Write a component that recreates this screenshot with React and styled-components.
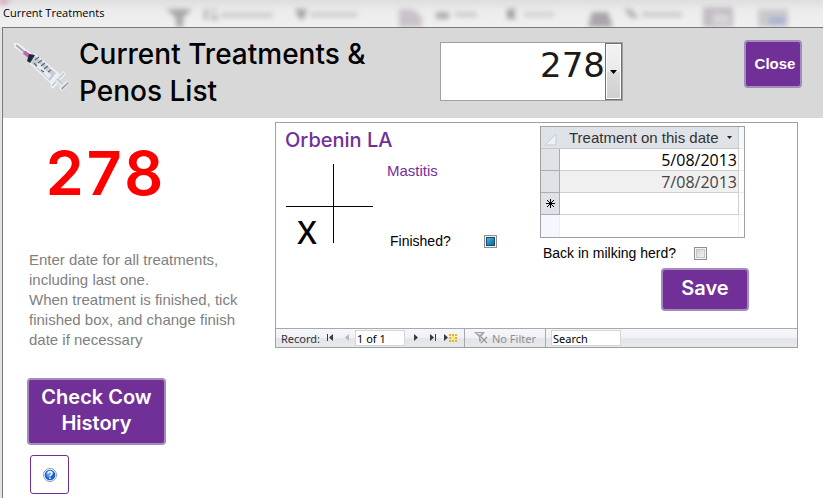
import styled, { createGlobalStyle } from "styled-components";

const treatments = ["5/08/2013", "7/08/2013"];

const RibbonBlur = () => (
  <RibbonSvg viewBox="0 0 823 27" preserveAspectRatio="xMinYMin slice" aria-hidden="true">
    <defs>
      <filter id="soft" x="-20%" y="-50%" width="140%" height="200%">
        <feGaussianBlur stdDeviation="2.6" />
      </filter>
    </defs>
    <g filter="url(#soft)">
      <path d="M0 0h12l-8 4H0z" fill="#d68aa5" />
      <path d="M166 9h26l-9 9v9h-7v-9z" fill="#aaa6ab" />
      <path d="M204 9h4v11h-4zM211 9h5v3h-5zM211 15h7v5h-7z" fill="#b9b7ba" />
      <path d="M221 12h52v6h-52z" fill="#d0d0d0" />
      <path d="M295 9h12l-3 10h-5z" fill="#a9a5aa" />
      <path d="M310 12h48v5h-48z" fill="#cecece" />
      <path d="M399 9h14l9 8v10h-23z" fill="#c9c3c9" />
      <path d="M436 12h13v7h-13z" fill="#b0adb1" />
      <path d="M455 12h22v5h-22z" fill="#cccccc" />
      <path d="M507 9h10l-4 5 4 5h-10z" fill="#a19ca2" />
      <path d="M524 12h30v5h-30z" fill="#d2d2d2" />
      <path d="M588 27l4-15h16l5 15z" fill="#aaa5ab" />
      <path d="M624 9h7l8 9h-8z" fill="#b3b0b4" />
      <path d="M642 12h40v5h-40z" fill="#cacaca" />
      <path d="M703 7h30v20h-30z" fill="#c2bec3" />
      <path d="M713 14h16v10h-16z" fill="#d8d5d9" />
      <path d="M758 9h30v18h-30z" fill="#cac9cc" />
      <path d="M769 17h16v7h-16z" fill="#a5b3d2" />
    </g>
  </RibbonSvg>
);

const Syringe = () => (
  <SyringeSvg viewBox="0 0 56 50" aria-hidden="true">
    <path d="M2 2l12 9" stroke="#f4f4f6" strokeWidth="5" strokeLinecap="round" />
    <path d="M2 2l12 10" stroke="#a4a8b2" strokeWidth="2" />
    <path d="M10 9l5 4" stroke="#c45fb4" strokeWidth="4" />
    <path d="M20 10l26 21-8 11-24-23z" fill="#eef0f3" />
    <path d="M20 12l22 18-6 8-21-20z" fill="#c6cbd4" />
    <path d="M23 21l13 13" stroke="#e8ebf0" strokeWidth="4" />
    <path d="M15 11l6 1-5 8-3-2z" fill="#20263a" />
    <path d="M21 17l4-3M24 20l4-3M27 23l4-3M30 26l4-3M34 29l3-2M20 20l3 3M27 27l3 2" stroke="#5f677a" strokeWidth="1.3" />
    <path d="M36 43L49 28l3 3-13 15z" fill="#eef1f5" />
    <path d="M38 43l12-13" stroke="#b9c3d4" strokeWidth="1.3" />
    <path d="M42 36l7 6" stroke="#dfe4ec" strokeWidth="5" />
    <path d="M43 36l6 5" stroke="#a6afbd" />
    <path d="M45 45l8-7 3 2-8 8z" fill="#f3f4f6" />
    <path d="M47 45l7-6 1 1-7 7z" fill="#9da0a8" />
  </SyringeSvg>
);

const RecordNavigation = () => (
  <RecordBar>
    <RecordLabel htmlFor="record">Record:</RecordLabel>
    <NavButton aria-label="First record">
      <svg width="7" height="8"><path d="M0 0h1v7H0zM6 0v7L2 3.5z" fill="#343942" /></svg>
    </NavButton>
    <NavButton aria-label="Previous record">
      <svg width="5" height="8"><path d="M4 0v7L0 3.5z" fill="#b4b7bc" /></svg>
    </NavButton>
    <BarInput id="record" defaultValue="1 of 1" />
    <NavButton aria-label="Next record">
      <svg width="5" height="8"><path d="M0 0v7l4-3.5z" fill="#343942" /></svg>
    </NavButton>
    <NavButton aria-label="Last record" $tight>
      <svg width="7" height="8"><path d="M0 0v7l4-3.5zM5 0h1v7H5z" fill="#343942" /></svg>
    </NavButton>
    <NavButton aria-label="New record" $tight>
      <svg width="13" height="8">
        <path d="M0 0v7l4-3.5z" fill="#343942" />
        <path d="M5 0h2v2H5zM8 0h2v2H8zM11 0h2v2h-2zM5 3h2v2H5zM11 3h2v2h-2zM5 6h2v2H5zM8 6h2v2H8zM11 6h2v2h-2z" fill="#e4b525" />
        <path d="M7 2h4v4H7z" fill="#fbe67a" />
      </svg>
    </NavButton>
    <FilterButton disabled>
      <svg width="14" height="12">
        <path d="M0 0h11L7 5v6L5 9V5z" fill="#a2a3a7" />
        <path d="M2 1h6L6 3z" fill="#e3e4e6" />
        <path d="M7 5l6 6M13 5l-6 6" stroke="#f0f0f0" strokeWidth="3" />
        <path d="M7 5l6 6M13 5l-6 6" stroke="#96979b" strokeWidth="1.4" />
      </svg>
      No Filter
    </FilterButton>
    <SearchInput aria-label="Search" placeholder="Search" />
  </RecordBar>
);

const TreatmentDates = () => (
  <DateTable>
    <colgroup>
      <col width="19" />
      <col />
      <col width="5" />
    </colgroup>
    <thead>
      <tr>
        <HeadCell aria-label="Select all">
          <svg width="18" height="16"><path d="M15 4v11H4z" fill="#eaf1f8" stroke="#c3ccd6" /></svg>
        </HeadCell>
        <HeadCell $divider>
          <HeadContent>
            Treatment on this date
            <svg width="5" height="3"><path d="M0 0h5L2.5 3z" fill="#222" /></svg>
          </HeadContent>
        </HeadCell>
        <EdgeCell $tinted />
      </tr>
    </thead>
    <tbody>
      {treatments.map((date, index) => (
        <tr key={date}>
          <Selector />
          <DateCell $shaded={index % 2 === 1}>{date}</DateCell>
          <EdgeCell />
        </tr>
      ))}
      <tr>
        <Selector>
          <svg width="9" height="9"><path d="M4.5 0v9M0 4.5h9M1 1l7 7M8 1L1 8" stroke="#000" /></svg>
        </Selector>
        <DateCell />
        <EdgeCell />
      </tr>
      <tr>
        <EmptyCell $tinted />
        <EmptyCell />
        <EmptyCell />
      </tr>
    </tbody>
  </DateTable>
);

export default function App() {
  return (
    <>
      <GlobalStyle />
      <Frame>
        <TitleBar>
          <RibbonBlur />
          <WindowTitle>Current Treatments</WindowTitle>
        </TitleBar>
        <FormWindow>
          <Header>
            <Syringe />
            <Title>Current Treatments & Penos List</Title>
            <Combo>
              <ComboSelect aria-label="Cow number" defaultValue="278">
                <option>278</option>
              </ComboSelect>
              <ComboArrow>
                <svg width="7" height="4"><path d="M0 0h7L3.5 4z" fill="#000" /></svg>
              </ComboArrow>
            </Combo>
            <CloseButton>Close</CloseButton>
          </Header>
          <Body>
            <Sidebar>
              <CowNumber>278</CowNumber>
              <Help>
                Enter date for all treatments, including last one.
                <br />
                When treatment is finished, tick finished box, and change finish date if necessary
              </Help>
              <HistoryButton>Check Cow History</HistoryButton>
              <HelpButton aria-label="Help">
                <svg width="14" height="14" viewBox="0 0 14 14">
                  <circle cx="7" cy="7" r="6.5" fill="#fff" stroke="#7d9cc8" />
                  <circle cx="7" cy="7" r="5.3" fill="#1c5fd0" />
                  <path d="M3 6a4 4 0 0 1 7-2L5 10z" fill="#5d9df0" />
                  <path d="M5 5.6C5 3.2 9 3.2 9 5.4 9 6.8 7 6.8 7 8.4M7 9.5v1.4" fill="none" stroke="#fff" strokeWidth="1.5" />
                </svg>
              </HelpButton>
            </Sidebar>
            <Panel>
              <Record>
                <Drug>Orbenin LA</Drug>
                <Quarters>
                  <Quarter />
                  <Quarter />
                  <Quarter>X</Quarter>
                  <Quarter />
                </Quarters>
                <Details>
                  <Condition>Mastitis</Condition>
                  <CheckRow $gap={33}>
                    <label htmlFor="finished">Finished?</label>
                    <Checkbox id="finished" type="checkbox" $filled />
                  </CheckRow>
                </Details>
                <Dates>
                  <TreatmentDates />
                  <CheckRow $gap={18}>
                    <label htmlFor="herd">Back in milking herd?</label>
                    <Checkbox id="herd" type="checkbox" />
                  </CheckRow>
                  <SaveButton>Save</SaveButton>
                </Dates>
              </Record>
              <RecordNavigation />
            </Panel>
          </Body>
        </FormWindow>
      </Frame>
    </>
  );
}

const GlobalStyle = createGlobalStyle`
  * {
    box-sizing: border-box;
  }

  body {
    margin: 0;
    background-color: #fff;
    color: #000;
    font-family: "Liberation Sans", Arial, sans-serif;
    font-size: 15px;
  }

  button, input, select {
    font-family: inherit;
    margin: 0;
  }

  svg {
    display: block;
  }
`;

const Frame = styled.div`
  min-height: 100vh;
  display: flex;
  flex-direction: column;
  padding-left: 2px;
  background: linear-gradient(90deg, #d9dce0, #f5f5f5 3px);
`;

const TitleBar = styled.div`
  display: grid;
  height: 27px;
  margin-left: -2px;
  overflow: hidden;
  background: linear-gradient(#dedede, #ececec 40%, #f0f0f0);
`;

const RibbonSvg = styled.svg`
  grid-area: 1 / 1;
  width: 100%;
  height: 27px;
`;

const WindowTitle = styled.span`
  grid-area: 1 / 1;
  justify-self: start;
  z-index: 1;
  padding: 0 8px 0 3px;
  font-family: "Open Sans", sans-serif;
  font-size: 11px;
  line-height: 26px;
`;

const FormWindow = styled.main`
  flex: 1;
  border-top: 1px solid #777;
  border-left: 1px solid #777;
  background-color: #fff;
`;

const Header = styled.header`
  display: flex;
  align-items: flex-start;
  height: 90px;
  padding: 12px 21px 0 11px;
  background-color: #d8d8d8;
`;

const SyringeSvg = styled.svg`
  flex: none;
  width: 56px;
  height: 50px;
  margin-top: 3px;
`;

const Title = styled.h1`
  width: 300px;
  margin: -4px 61px 0 9px;
  font-family: Inter, sans-serif;
  font-size: 28px;
  font-weight: 500;
  line-height: 37px;
`;

const Combo = styled.div`
  display: grid;
  grid-template-columns: 1fr 17px;
  width: 183px;
  height: 59px;
  margin-top: 2px;
  border: 1px solid #a0a0a0;
  background-color: #fff;
`;

const ComboSelect = styled.select`
  grid-area: 1 / 1 / 2 / 3;
  appearance: none;
  border: none;
  background: none;
  padding: 0 17px 14px 0;
  color: #1a1a1a;
  font-family: "DejaVu Sans", sans-serif;
  font-size: 34px;
  text-align-last: right;
`;

const ComboArrow = styled.span`
  grid-area: 1 / 2;
  display: grid;
  place-items: center;
  border: 1px solid #707070;
  background: linear-gradient(#f2f2f2, #ebebeb 50%, #dcdcdc 50%, #cfcfcf);
  box-shadow: inset 0 0 0 1px #fff;
  pointer-events: none;
`;

const PurpleButton = styled.button`
  border: 2px solid #a58bbd;
  border-radius: 4px;
  padding: 0 0 3px;
  color: #fff;
  background-color: #703098;
  font-family: Inter, sans-serif;
  font-size: 20px;
  font-weight: 600;
`;

const CloseButton = styled(PurpleButton)`
  width: 58px;
  height: 48px;
  margin-left: auto;
  padding: 0 0 2px 4px;
  font-family: "Liberation Sans", sans-serif;
  font-size: 15px;
  font-weight: 700;
`;

const Body = styled.div`
  display: flex;
  align-items: flex-start;
`;

const Sidebar = styled.aside`
  flex: none;
  width: 272px;
  padding: 25px 24px 4px;
`;

const CowNumber = styled.div`
  padding-left: 18px;
  color: #f00;
  font-family: Inter, sans-serif;
  font-size: 61px;
  font-weight: 600;
  font-variant-numeric: tabular-nums;
  line-height: 60px;
`;

const Help = styled.p`
  width: 212px;
  margin: 47px 0 28px 2px;
  color: #808080;
  line-height: 20px;
`;

const HistoryButton = styled(PurpleButton)`
  display: block;
  width: 139px;
  height: 67px;
  line-height: 26px;
`;

const HelpButton = styled.button`
  display: grid;
  place-items: center;
  width: 39px;
  height: 39px;
  margin: 10px 0 0 3px;
  padding: 0;
  border: 1px solid #703098;
  border-radius: 3px;
  background-color: #fff;
`;

const Panel = styled.section`
  flex: 1;
  margin: 4px 25px 0 0;
  border: 1px solid #a0a0a0;
`;

const Record = styled.div`
  display: grid;
  grid-template-columns: 102px 153px 1fr;
  grid-template-rows: 38px 1fr;
  height: 205px;
  padding: 3px 0 0 9px;
`;

const Drug = styled.h2`
  grid-area: 1 / 1 / 2 / 3;
  margin: 0;
  color: #703098;
  font-family: Inter, sans-serif;
  font-size: 20px;
  font-weight: 500;
  line-height: 28px;
`;

const Quarters = styled.div`
  grid-area: 2 / 1;
  display: grid;
  grid-template-columns: 48px 39px;
  grid-template-rows: 43px 36px;
  align-self: start;
  margin-left: 1px;
`;

const Quarter = styled.div`
  padding-right: 5px;
  font-family: "Noto Sans", sans-serif;
  font-size: 32px;
  font-weight: 500;
  line-height: 50px;
  text-align: center;

  &:nth-child(odd) {
    border-right: 1px solid #000;
  }

  &:nth-child(-n + 2) {
    border-bottom: 1px solid #000;
  }
`;

const Details = styled.div`
  grid-area: 2 / 2;
`;

const Condition = styled.div`
  margin-bottom: 54px;
  color: #703098;
  line-height: 14px;
`;

const CheckRow = styled.div`
  display: flex;
  align-items: center;
  gap: ${({ $gap }) => $gap}px;
  padding-left: 3px;
  font-size: 14px;
  line-height: 18px;
`;

const Checkbox = styled.input`
  appearance: none;
  width: 13px;
  height: 13px;
  border: 1px solid #8e8f8f;
  background: ${({ $filled }) =>
    $filled
      ? "linear-gradient(135deg, #6fc5e8, #1583b5 60%, #0b4f7d)"
      : "linear-gradient(135deg, #cbcfd5, #f6f6f6)"};
  box-shadow: inset 0 0 0 1px #f4f4f4
    ${({ $filled }) => ($filled ? ", inset 0 0 0 2px #1c4a72" : ", inset 0 0 0 2px #c3c6cb")};
`;

const Dates = styled.div`
  grid-area: 1 / 3 / 3 / 4;
  display: flex;
  flex-direction: column;
  align-items: flex-start;
  gap: 6px;
`;

const SaveButton = styled(PurpleButton)`
  width: 88px;
  height: 43px;
  margin-left: 121px;
`;

const DateTable = styled.table`
  width: 205px;
  table-layout: fixed;
  border: 1px solid #a0a0a0;
  border-spacing: 0;

  td, th {
    height: 22px;
    padding: 0;
    line-height: 20px;
  }
`;

const HeadCell = styled.th`
  border-right: ${({ $divider }) => ($divider ? "1px solid #c9ccd1" : "none")};
  border-bottom: 1px solid #c4c8ce;
  background-color: #dfe2e7;
  color: #333;
  font-weight: 400;
`;

const HeadContent = styled.div`
  display: flex;
  align-items: center;
  justify-content: space-between;
  padding: 0 6px 0 9px;
  white-space: nowrap;
`;

const Selector = styled.td`
  border-right: 1px solid #a8adb5;
  border-bottom: 1px solid #a8adb5;
  background-color: #dfe2e7;

  svg {
    margin: 0 auto;
  }
`;

const DateCell = styled.td`
  border-right: 1px solid #cfcfcf;
  border-bottom: 1px solid #cfcfcf;
  background-color: ${({ $shaded }) => ($shaded ? "#f0f0f0" : "#fff")};
  color: ${({ $shaded }) => ($shaded ? "#444" : "#000")};
  font-family: "Open Sans", sans-serif;
  font-size: 16px;
  text-align: right;

  && {
    padding-right: 1px;
  }
`;

const EdgeCell = styled.td`
  border-bottom: 1px solid #ececec;
  background-color: ${({ $tinted }) => ($tinted ? "#f5f6ff" : "#fff")};
`;

const EmptyCell = styled.td`
  border-right: 1px solid #efefef;
  background-color: ${({ $tinted }) => ($tinted ? "#f5f6ff" : "#fff")};

  &:last-child {
    border-right: none;
  }
`;

const RecordBar = styled.div`
  display: flex;
  align-items: center;
  height: 19px;
  padding-left: 5px;
  border-top: 1px solid #a7a7b2;
  background: linear-gradient(#f5f6f8, #f0f2f5 50%, #e3e5e8 50%, #e6e8eb);
  font-family: "Noto Sans", sans-serif;
  font-size: 11px;
`;

const RecordLabel = styled.label`
  width: 46px;
  color: #333;
`;

const NavButton = styled.button`
  display: flex;
  padding: 0;
  margin-right: ${({ $tight }) => ($tight ? 7 : 11)}px;
  border: none;
  background: none;
`;

const BarInput = styled.input`
  width: 50px;
  height: 16px;
  margin: 0 9px 0 -6px;
  padding: 0 1px;
  border: 1px solid #d2d5da;
  background-color: #fff;
  color: #000;
  font-size: 11px;

  &::placeholder {
    color: #000;
    opacity: 1;
  }
`;

const SearchInput = styled(BarInput)`
  width: 70px;
  margin: 0 0 0 5px;
`;

const FilterButton = styled.button`
  display: flex;
  align-items: center;
  gap: 4px;
  height: 18px;
  padding: 0 9px;
  border: solid #a7a7b2;
  border-width: 0 1px;
  background: none;
  color: #8d8f94;
  font-size: 11px;
`;
